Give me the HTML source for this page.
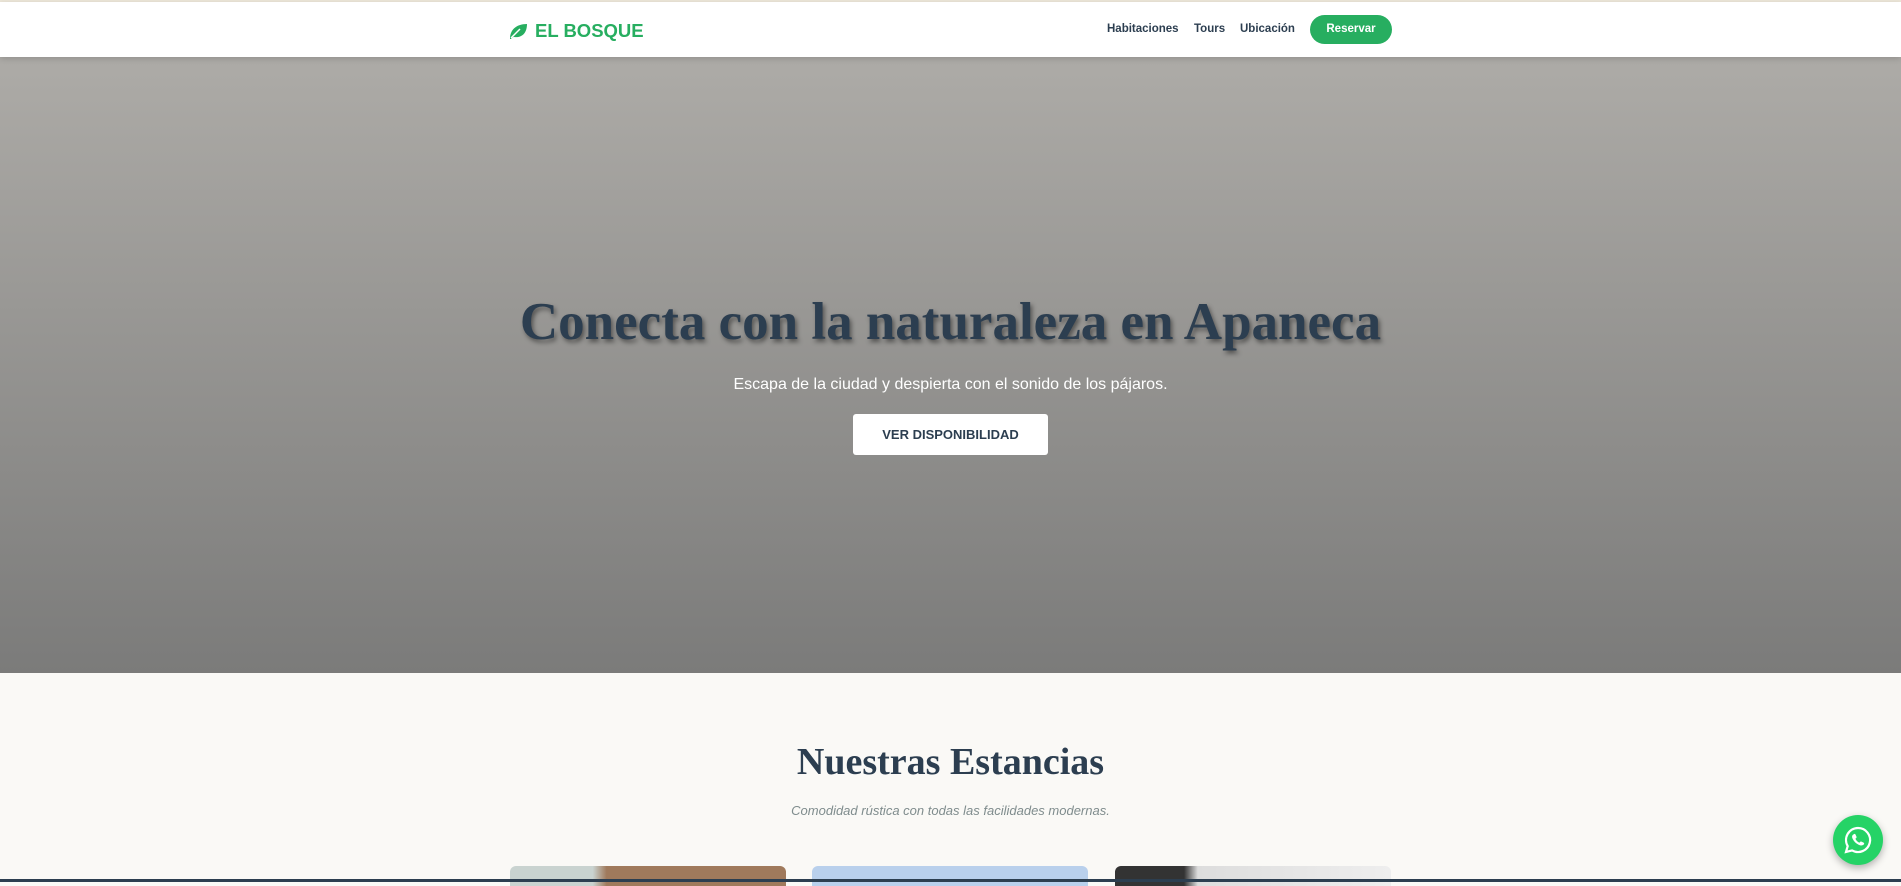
<!DOCTYPE html>
<html><head><meta charset="utf-8"><style>
*{margin:0;padding:0;box-sizing:border-box}
body{width:1901px;height:882px;overflow:hidden;background:#faf9f6;font-family:"Liberation Sans",sans-serif;position:relative}
.top{position:absolute;top:0;left:0;right:0;height:2px;background:#ece6d8}
nav{position:absolute;top:2px;left:0;right:0;height:55px;background:#fff;box-shadow:0 2px 6px rgba(0,0,0,.15);z-index:2}
.logo{position:absolute;left:508px;top:18px;color:#27ae60;font-weight:bold;font-size:18.5px;display:flex;align-items:center;gap:7px}
.links{position:absolute;left:1107px;top:21px;font-size:11.5px;font-weight:bold;color:#2c3e50}
.links span{position:absolute;white-space:nowrap}
.btn{position:absolute;left:1310px;top:13px;width:82px;height:29px;border-radius:15px;background:#27ae60;color:#fff;font-size:11.5px;font-weight:bold;text-align:center;line-height:29px}
.hero{position:absolute;top:57px;left:0;right:0;height:616px;background:linear-gradient(#adaba7,#7b7b7a)}
h1{position:absolute;top:292px;left:0;right:0;text-align:center;font-family:"Liberation Serif",serif;font-weight:bold;font-size:53px;color:#2c3e50;text-shadow:2px 3px 5px rgba(0,0,0,.45)}
.sub{position:absolute;top:376px;left:0;right:0;text-align:center;color:#fff;font-size:16px}
.cta{position:absolute;left:853px;top:414px;width:195px;height:41px;background:#fff;border-radius:3px;text-align:center;line-height:41px;font-size:13px;font-weight:bold;color:#2c3e50}
h2{position:absolute;top:740px;left:0;right:0;text-align:center;font-family:"Liberation Serif",serif;font-weight:bold;font-size:38px;color:#2c3e50}
.sub2{position:absolute;top:803px;left:0;right:0;text-align:center;font-style:italic;font-size:13px;color:#7f8c8d}
.card{position:absolute;top:866px;width:276px;height:20px;border-radius:6px 6px 0 0}
.bar{position:absolute;left:0;right:0;top:879px;height:3px;background:#2c3e50}
.wa{position:absolute;left:1833px;top:815px;width:50px;height:50px;border-radius:50%;background:#25d366;box-shadow:0 3px 8px rgba(0,0,0,.3);display:flex;align-items:center;justify-content:center}
</style></head><body>
<div class="top"></div>
<nav>
<div class="logo"><svg width="20" height="18" viewBox="0 0 20 18"><path d="M2 17 C2 8 8 2 19 2 C19 12 13 16 6 15 C5 15 4 16 3 17Z" fill="#27ae60"/><path d="M3 16 L12 7" stroke="#fff" stroke-width="1.5"/></svg>EL BOSQUE</div>
<div class="links"><span style="left:0">Habitaciones</span><span style="left:87px">Tours</span><span style="left:133px">Ubicación</span></div>
<div class="btn">Reservar</div>
</nav>
<div class="hero">
</div>
<h1>Conecta con la naturaleza en Apaneca</h1>
<div class="sub">Escapa de la ciudad y despierta con el sonido de los pájaros.</div>
<div class="cta">VER DISPONIBILIDAD</div>
<h2>Nuestras Estancias</h2>
<div class="sub2">Comodidad rústica con todas las facilidades modernas.</div>
<div class="card" style="left:510px;background:linear-gradient(90deg,#c9d3d0 30%,#a07a5c 35%)"></div>
<div class="card" style="left:812px;background:#b9d0ec"></div>
<div class="card" style="left:1115px;background:linear-gradient(90deg,#333 25%,#ddd 30%,#eee)"></div>
<div class="bar"></div>
<div class="wa"><svg width="30" height="30" viewBox="0 0 30 30"><path d="M15 3a12 12 0 0 0-10.3 18.1L3 27l6.1-1.6A12 12 0 1 0 15 3z" fill="none" stroke="#fff" stroke-width="2.2"/><path d="M10.5 9.5c.5-.8 1.5-.8 2 0l1 2.2c.2.5 0 1-.4 1.4l-.7.6c.8 1.8 2.2 3.2 4 4l.6-.7c.4-.4.9-.6 1.4-.4l2.2 1c.8.5.8 1.5 0 2-1.3 1-3 1.2-5 .2-2.6-1.3-4.6-3.3-5.9-5.9-1-2-.8-3.7.8-4.4z" fill="#fff"/></svg></div>
</body></html>
